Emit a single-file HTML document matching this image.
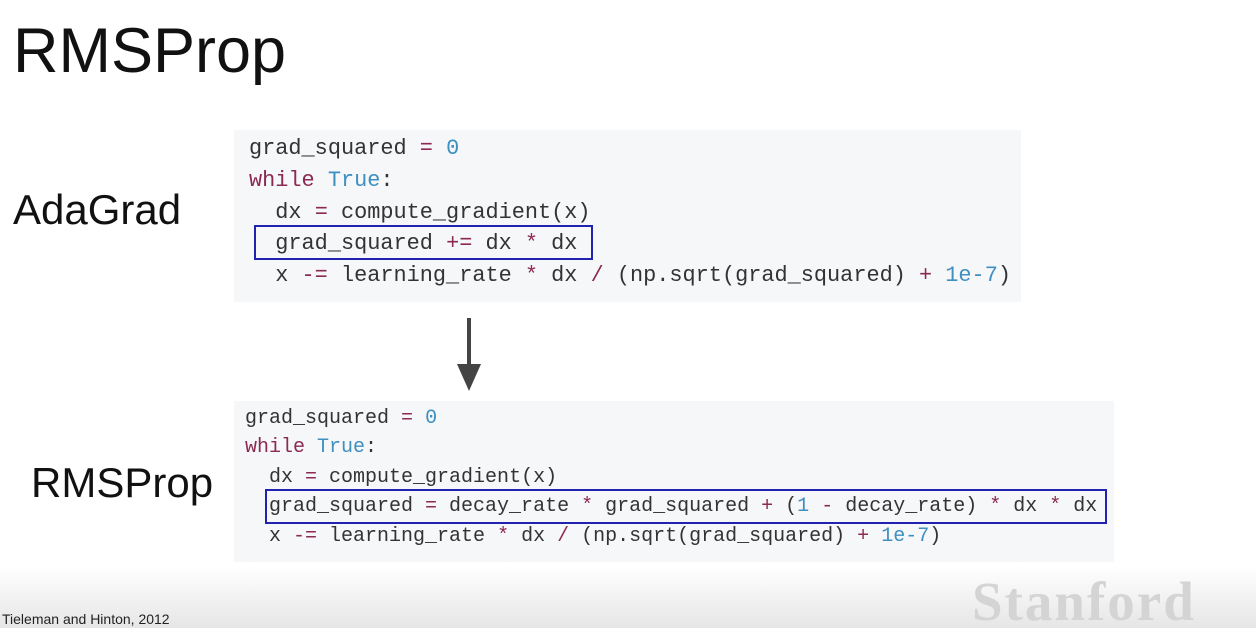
<!DOCTYPE html>
<html><head><meta charset="utf-8"><style>
body{margin:0;width:1256px;height:628px;background:#fff;position:relative;overflow:hidden;font-family:"Liberation Sans",sans-serif;}
.abs{position:absolute;white-space:pre;}
.code{position:absolute;background:#f6f7f9;font-family:"Liberation Mono",monospace;color:#333;}
.code div{position:absolute;white-space:pre;}
.k{color:#8b2a52}.b{color:#3f8fc0}.o{color:#8b2a52}
.hl{position:absolute;border:2px solid #2222b0;}
</style></head><body>
<div class="abs" style="left:13px;top:15px;font-size:63px;color:#111">RMSProp</div>
<div class="abs" style="left:13px;top:186px;font-size:42px;color:#111">AdaGrad</div>
<div class="abs" style="left:31px;top:459px;font-size:42px;color:#111">RMSProp</div>

<div class="code" style="left:234px;top:130px;width:787px;height:172px;font-size:21.9px;">
<div style="left:15px;top:6px">grad_squared <span class="o">=</span> <span class="b">0</span></div>
<div style="left:15px;top:38px"><span class="k">while</span> <span class="b">True</span>:</div>
<div style="left:15px;top:70px">  dx <span class="o">=</span> compute_gradient(x)</div>
<div style="left:15px;top:101px">  grad_squared <span class="o">+=</span> dx <span class="o">*</span> dx</div>
<div style="left:15px;top:133px">  x <span class="o">-=</span> learning_rate <span class="o">*</span> dx <span class="o">/</span> (np.sqrt(grad_squared) <span class="o">+</span> <span class="b">1e-7</span>)</div>
</div>
<div class="hl" style="left:254px;top:225px;width:335px;height:31px"></div>

<svg class="abs" style="left:455px;top:316px" width="28" height="76"><rect x="12" y="2" width="4" height="48" fill="#444"/><polygon points="2,48 26,48 14,75" fill="#444"/></svg>

<div class="code" style="left:234px;top:401px;width:880px;height:161px;font-size:20px;">
<div style="left:11px;top:6px">grad_squared <span class="o">=</span> <span class="b">0</span></div>
<div style="left:11px;top:35px"><span class="k">while</span> <span class="b">True</span>:</div>
<div style="left:11px;top:65px">  dx <span class="o">=</span> compute_gradient(x)</div>
<div style="left:11px;top:94px">  grad_squared <span class="o">=</span> decay_rate <span class="o">*</span> grad_squared <span class="o">+</span> (<span class="b">1</span> <span class="o">-</span> decay_rate) <span class="o">*</span> dx <span class="o">*</span> dx</div>
<div style="left:11px;top:124px">  x <span class="o">-=</span> learning_rate <span class="o">*</span> dx <span class="o">/</span> (np.sqrt(grad_squared) <span class="o">+</span> <span class="b">1e-7</span>)</div>
</div>
<div class="hl" style="left:265px;top:489px;width:838px;height:31px"></div>

<div style="position:absolute;left:0;top:566px;width:1256px;height:62px;background:linear-gradient(#fff,#e6e6e6)"></div>
<div class="abs" style="left:972px;top:570px;font-family:'Liberation Serif',serif;font-weight:bold;font-size:55px;color:#d4d4d4;letter-spacing:2px">Stanford</div>
<div class="abs" style="left:2px;top:611px;font-size:14px;color:#222">Tieleman and Hinton, 2012</div>
</body></html>
